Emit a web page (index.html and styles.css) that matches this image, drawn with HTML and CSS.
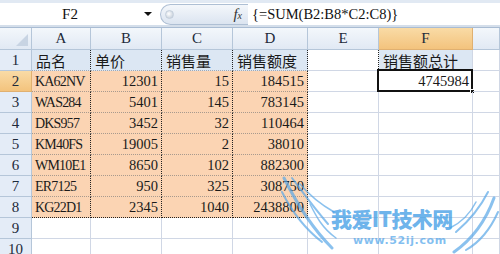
FILE: index.html
```html
<!DOCTYPE html>
<html>
<head>
<meta charset="utf-8">
<link rel="stylesheet" href="styles.css">
</head>
<body>
<div class="app">
  <div class="fbar">
    <div class="namebox">F2</div>
    <div class="dd"></div>
    <div class="pill"><span class="knob"></span><span class="fx">f<span class="x">x</span></span></div>
    <div class="formula">{=SUM(B2:B8*C2:C8)}</div>
  </div>
  <div class="sep"></div>
  <div class="grid">
    <div class="corner"><span class="tri"></span></div>
    <div class="ch">A</div><div class="ch">B</div><div class="ch">C</div><div class="ch">D</div><div class="ch">E</div><div class="ch hl">F</div><div class="ch"></div>

    <div class="rh">1</div>
    <div class="c hd dr">品名</div><div class="c hd dr">单价</div><div class="c hd dr">销售量</div><div class="c hd dr">销售额度</div><div class="c dr0"></div><div class="c hd">销售额总计</div><div class="c"></div>

    <div class="rh hl">2</div>
    <div class="c pe dr nm">KA62NV</div><div class="c pe dr num">12301</div><div class="c pe dr num">15</div><div class="c pe dr num">184515</div><div class="c"></div><div class="c num sel">4745984<span class="handle"></span></div><div class="c"></div>

    <div class="rh">3</div>
    <div class="c pe dr nm">WAS284</div><div class="c pe dr num">5401</div><div class="c pe dr num">145</div><div class="c pe dr num">783145</div><div class="c"></div><div class="c"></div><div class="c"></div>

    <div class="rh">4</div>
    <div class="c pe dr nm">DKS957</div><div class="c pe dr num">3452</div><div class="c pe dr num">32</div><div class="c pe dr num">110464</div><div class="c"></div><div class="c"></div><div class="c"></div>

    <div class="rh">5</div>
    <div class="c pe dr nm">KM40FS</div><div class="c pe dr num">19005</div><div class="c pe dr num">2</div><div class="c pe dr num">38010</div><div class="c"></div><div class="c"></div><div class="c"></div>

    <div class="rh">6</div>
    <div class="c pe dr nm">WM10E1</div><div class="c pe dr num">8650</div><div class="c pe dr num">102</div><div class="c pe dr num">882300</div><div class="c"></div><div class="c"></div><div class="c"></div>

    <div class="rh">7</div>
    <div class="c pe dr nm">ER7125</div><div class="c pe dr num">950</div><div class="c pe dr num">325</div><div class="c pe dr num">308750</div><div class="c"></div><div class="c"></div><div class="c"></div>

    <div class="rh">8</div>
    <div class="c pe dr db nm">KG22D1</div><div class="c pe dr db num">2345</div><div class="c pe dr db num">1040</div><div class="c pe dr db num">2438800</div><div class="c"></div><div class="c"></div><div class="c"></div>

    <div class="rh">9</div>
    <div class="c"></div><div class="c"></div><div class="c"></div><div class="c"></div><div class="c"></div><div class="c"></div><div class="c"></div>

    <div class="rh">10</div>
    <div class="c"></div><div class="c"></div><div class="c"></div><div class="c"></div><div class="c"></div><div class="c"></div><div class="c"></div>
  </div>

  <div class="wm">
    <svg class="wings" width="220" height="80" viewBox="0 0 220 80">
      <g fill="none" stroke="#5aa8e8" stroke-linecap="round" opacity="0.7">
        <path d="M4 2 C 16 26, 30 50, 52 72" stroke-width="3"/>
        <path d="M12 2 C 24 18, 34 32, 48 48" stroke-width="2"/>
        <path d="M2 16 C 12 36, 24 52, 42 66" stroke-width="2"/>
        <path d="M20 8 C 30 20, 40 28, 54 36" stroke-width="1.5"/>
        <path d="M30 28 C 36 40, 42 52, 56 62" stroke-width="1.5"/>
        <path d="M214 22 C 206 44, 194 62, 174 76" stroke-width="3"/>
        <path d="M208 16 C 200 32, 190 44, 176 56" stroke-width="2"/>
        <path d="M218 36 C 210 54, 200 66, 186 74" stroke-width="2"/>
        <path d="M196 26 C 190 38, 182 46, 170 52" stroke-width="1.5"/>
      </g>
    </svg>
    <div class="wmt">我爱IT技术网</div>
    <div class="wmu">www.52ij.com</div>
  </div>
</div>
</body>
</html>
```

FILE: styles.css
```css
* { box-sizing: border-box; }
html, body { margin: 0; padding: 0; }
body { width: 500px; height: 254px; overflow: hidden; background: #fff; }
.app { position: relative; width: 500px; height: 254px; overflow: hidden; font-family: "Liberation Serif", "Noto Sans CJK SC", serif; }

.fbar {
  height: 25px;
  display: flex;
  align-items: center;
  background: #fff;
  border-top: 3px solid #e1e9f3;
}
.namebox {
  width: 140px;
  text-align: center;
  font-size: 15px;
  color: #111;
  padding-top: 1px;
}
.dd {
  width: 0; height: 0;
  margin-left: 4px;
  border-left: 4px solid transparent;
  border-right: 4px solid transparent;
  border-top: 4px solid #111;
}
.pill {
  margin-left: 8px;
  width: 88px;
  height: 21px;
  border: 1px solid #aebfd4;
  border-right: none;
  border-radius: 11px 0 0 11px;
  background: linear-gradient(#f4f7fb, #dbe4f0);
  display: flex;
  align-items: center;
  justify-content: space-between;
  padding: 0 6px 0 4px;
}
.knob {
  width: 9px; height: 9px; border-radius: 50%;
  background: radial-gradient(circle at 40% 40%, #ffffff, #b8c4d2);
  border: 1px solid #c4cfdc;
}
.fx { font-style: italic; font-size: 15px; color: #333; font-family: "Liberation Serif", serif; }
.fx .x { font-size: 10px; }
.formula {
  margin-left: 4px;
  font-family: "Liberation Serif", serif;
  font-size: 14.5px;
  color: #111;
  padding-top: 1px;
}
.sep {
  height: 3px;
  background: #d4deea;
  border-bottom: 1px solid #a9bcd3;
}

.grid {
  display: grid;
  grid-template-columns: 32px 59px 71px 71px 75px 71px 94px 1fr;
  grid-template-rows: 22px repeat(10, 21px);
}
.corner, .ch, .rh {
  background: linear-gradient(#f3f7fb, #e1e9f4);
  border-right: 1px solid #b5c6d9;
  border-bottom: 1px solid #b5c6d9;
  color: #1d2a3a;
  font-size: 15px;
  display: flex;
  align-items: center;
  justify-content: center;
}
.rh { background: #e4ecf7; }
.corner { position: relative; }
.tri {
  position: absolute;
  right: 3px; bottom: 3px;
  width: 0; height: 0;
  border-left: 12px solid transparent;
  border-bottom: 12px solid #c8d4e3;
}
.ch.hl, .rh.hl {
  background: linear-gradient(#f9dba6, #f3c37d);
  border-color: #e0b070;
}

.c {
  border-right: 1px solid #d0d7e5;
  border-bottom: 1px solid #d0d7e5;
  font-size: 14.5px;
  color: #1a1a1a;
  display: flex;
  align-items: center;
  padding: 1px 2px 0 3px;
  white-space: nowrap;
  position: relative;
}
.nm { font-size: 14px; letter-spacing: -0.8px; }
.num { justify-content: flex-end; padding-right: 3px; }
.hd { background: #dce7f3; font-size: 15px; font-family: "Noto Sans CJK SC", sans-serif; padding-left: 4px; }
.pe { background: #fbd4b3; border-bottom: 1px dotted #a89a8e; }
.hd.dr { border-bottom: 1px dotted #a0a8b4; }
.dr { border-right: 1px dotted #222; }
.dr0 { border-right: 1px dotted #222; }
.db { border-bottom: 1px dotted #222; }
.sel::before {
  content: "";
  position: absolute;
  left: -2px; top: -2px; right: -1px; bottom: -1px;
  border: 2px solid #111;
}
.handle {
  position: absolute;
  right: -3px; bottom: -3px;
  width: 5px; height: 5px;
  background: #111;
  border: 1px solid #fff;
}

.wm { position: absolute; left: 280px; top: 176px; width: 220px; height: 78px; pointer-events: none; }
.wings { position: absolute; left: 0; top: 0; }
.wmt {
  position: absolute;
  left: 51px; top: 30px;
  font-family: "Noto Sans CJK SC", sans-serif;
  font-weight: 900;
  font-size: 21px;
  line-height: 24px;
  letter-spacing: -0.6px;
  color: rgba(70, 160, 230, 0.8);
}
.wmu {
  position: absolute;
  left: 73px; top: 58px;
  font-family: "DejaVu Sans", sans-serif;
  font-weight: bold;
  font-size: 11px;
  letter-spacing: 0.6px;
  color: rgba(90, 170, 235, 0.75);
}
```
